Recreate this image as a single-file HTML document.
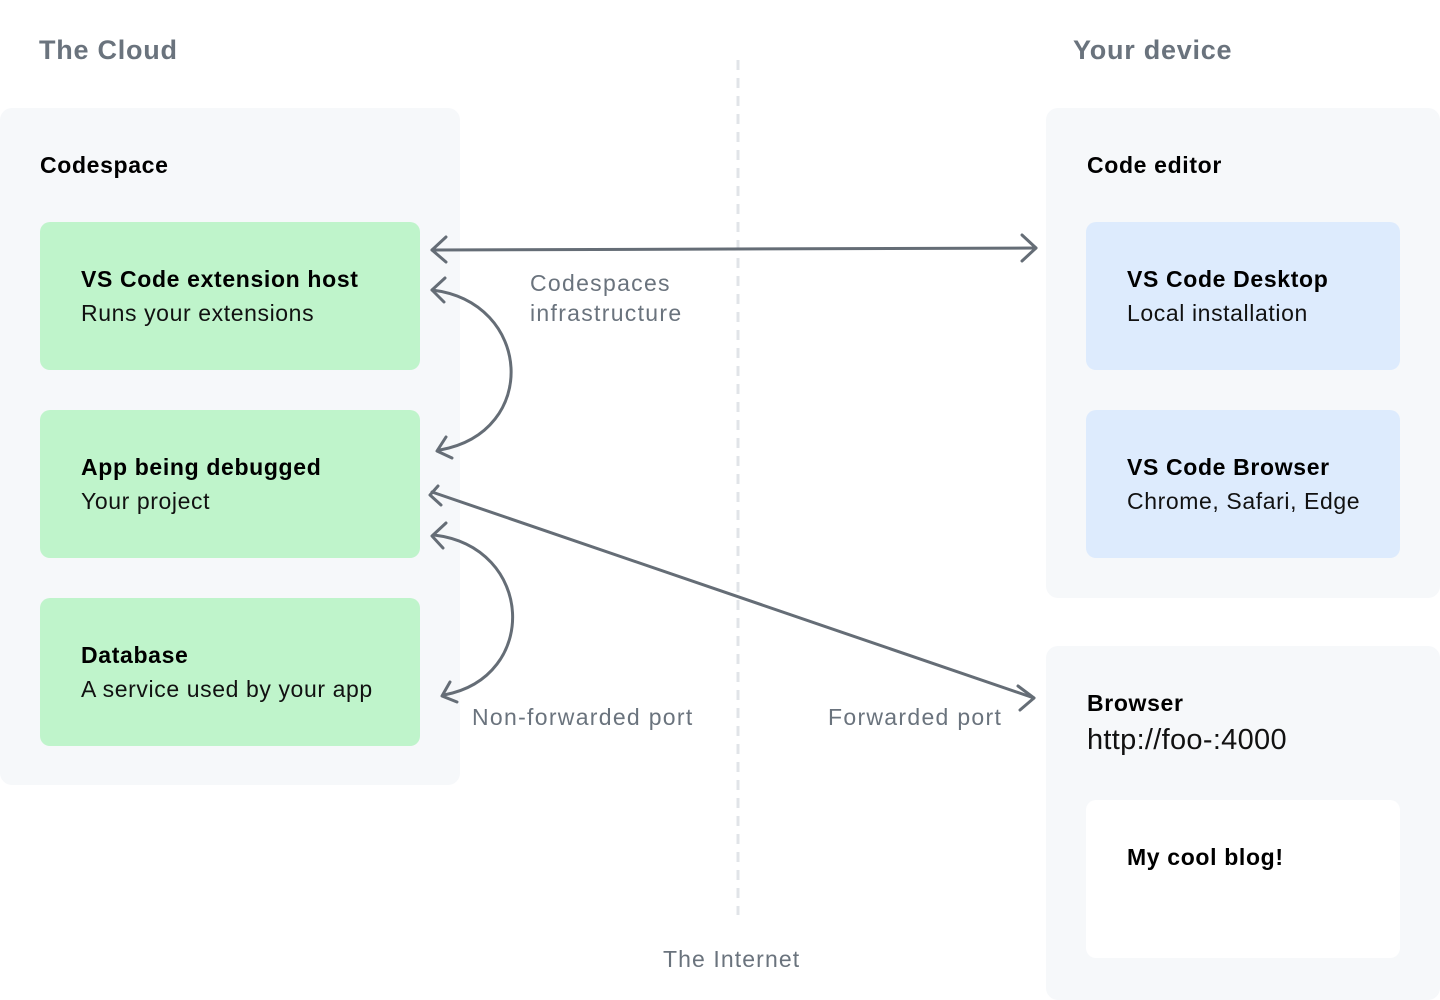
<!DOCTYPE html>
<html><head><meta charset="utf-8"><style>
body{margin:0;width:1440px;height:1000px;background:#fff;font-family:"Liberation Sans",sans-serif;position:relative;overflow:hidden}
.a{position:absolute}
.h{font-size:27px;font-weight:bold;color:#6a737d;letter-spacing:0.75px}
.panel{background:#f6f8fa;border-radius:12px}
.card{border-radius:10px}
.g{background:#bff4cb}.b{background:#ddebfd}
.t{font-size:23px;font-weight:bold;color:#000;letter-spacing:0.65px}
.s{font-size:23px;color:#111;letter-spacing:0.6px}
.l{font-size:23px;color:#6a737d;letter-spacing:1.3px}
</style></head><body>
<div class="a h" style="left:39px;top:35px">The Cloud</div>
<div class="a h" style="left:1073px;top:35px">Your device</div>
<div class="a panel" style="left:0;top:108px;width:460px;height:677px"></div>
<div class="a panel" style="left:1046px;top:108px;width:394px;height:490px"></div>
<div class="a panel" style="left:1046px;top:646px;width:394px;height:354px"></div>
<div class="a t" style="left:40px;top:152px">Codespace</div>
<div class="a t" style="left:1087px;top:152px">Code editor</div>
<div class="a card g" style="left:40px;top:222px;width:380px;height:148px"></div>
<div class="a card g" style="left:40px;top:410px;width:380px;height:148px"></div>
<div class="a card g" style="left:40px;top:598px;width:380px;height:148px"></div>
<div class="a card b" style="left:1086px;top:222px;width:314px;height:148px"></div>
<div class="a card b" style="left:1086px;top:410px;width:314px;height:148px"></div>
<div class="a card" style="left:1086px;top:800px;width:314px;height:158px;background:#fff"></div>
<div class="a t" style="left:81px;top:266px">VS Code extension host</div>
<div class="a s" style="left:81px;top:300px">Runs your extensions</div>
<div class="a t" style="left:81px;top:454px">App being debugged</div>
<div class="a s" style="left:81px;top:488px">Your project</div>
<div class="a t" style="left:81px;top:642px">Database</div>
<div class="a s" style="left:81px;top:676px">A service used by your app</div>
<div class="a t" style="left:1127px;top:266px">VS Code Desktop</div>
<div class="a s" style="left:1127px;top:300px">Local installation</div>
<div class="a t" style="left:1127px;top:454px">VS Code Browser</div>
<div class="a s" style="left:1127px;top:488px">Chrome, Safari, Edge</div>
<div class="a t" style="left:1087px;top:690px">Browser</div>
<div class="a" style="left:1087px;top:724px;font-size:29px;color:#111;letter-spacing:0.3px">http://foo-:4000</div>
<div class="a t" style="left:1127px;top:844px">My cool blog!</div>
<div class="a l" style="left:530px;top:268px;line-height:30px">Codespaces<br>infrastructure</div>
<div class="a l" style="left:472px;top:704px">Non-forwarded port</div>
<div class="a l" style="left:828px;top:704px">Forwarded port</div>
<div class="a l" style="left:663px;top:946px;letter-spacing:1.1px">The Internet</div>
<svg class="a" style="left:0;top:0" width="1440" height="1000">
<line x1="738" y1="60" x2="738" y2="915" stroke="#e1e4e8" stroke-width="3" stroke-dasharray="10 8"/>
<g fill="none" stroke="#656d76" stroke-width="3" stroke-linecap="round" stroke-linejoin="round">
<path d="M432,250 L1036,248"/>
<path d="M446,237 L432,250 L446,262"/>
<path d="M1022,235 L1036,248 L1022,261"/>
<path d="M432,290 C532,302 540,432 440,450"/>
<path d="M445,278 L432,290 L444,302"/>
<path d="M446,437 L437,451 L452,458"/>
<path d="M432,492 L1034,698"/>
<path d="M438,486 L430,495 L441,505" />
<path d="M1018,686 L1034,698 L1020,710"/>
<path d="M434,535 C534,547 540,677 444,695"/>
<path d="M446,523 L432,536 L443,548"/>
<path d="M450,682 L442,696 L457,702"/>
</g>
</svg>
</body></html>
